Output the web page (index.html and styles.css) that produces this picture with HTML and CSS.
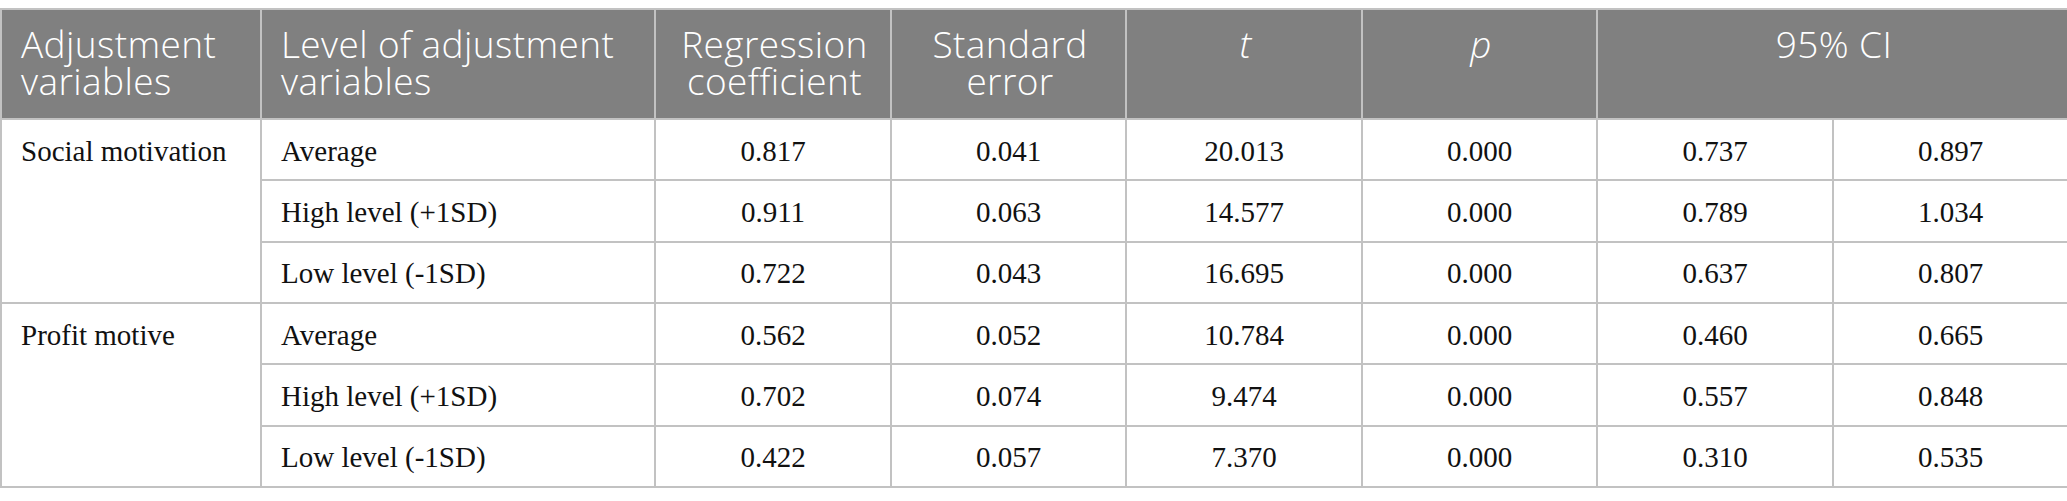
FILE: index.html
```html
<!DOCTYPE html>
<html>
<head>
<meta charset="utf-8">
<link rel="stylesheet" href="styles.css">
</head>
<body>
<table class="tbl">
  <colgroup>
    <col class="c1"><col class="c2"><col class="c3"><col class="c4"><col class="c5"><col class="c6"><col class="c7"><col class="c8">
  </colgroup>
  <thead>
    <tr>
      <th class="left">Adjustment variables</th>
      <th class="left">Level of adjustment variables</th>
      <th>Regression coefficient</th>
      <th>Standard error</th>
      <th><i>t</i></th>
      <th><i>p</i></th>
      <th colspan="2">95% CI</th>
    </tr>
  </thead>
  <tbody>
    <tr>
      <td class="left" rowspan="3">Social motivation</td>
      <td class="left">Average</td>
      <td>0.817</td><td>0.041</td><td>20.013</td><td>0.000</td><td>0.737</td><td>0.897</td>
    </tr>
    <tr>
      <td class="left">High level (+1SD)</td>
      <td>0.911</td><td>0.063</td><td>14.577</td><td>0.000</td><td>0.789</td><td>1.034</td>
    </tr>
    <tr>
      <td class="left">Low level (-1SD)</td>
      <td>0.722</td><td>0.043</td><td>16.695</td><td>0.000</td><td>0.637</td><td>0.807</td>
    </tr>
    <tr>
      <td class="left" rowspan="3">Profit motive</td>
      <td class="left">Average</td>
      <td>0.562</td><td>0.052</td><td>10.784</td><td>0.000</td><td>0.460</td><td>0.665</td>
    </tr>
    <tr>
      <td class="left">High level (+1SD)</td>
      <td>0.702</td><td>0.074</td><td>9.474</td><td>0.000</td><td>0.557</td><td>0.848</td>
    </tr>
    <tr>
      <td class="left">Low level (-1SD)</td>
      <td>0.422</td><td>0.057</td><td>7.370</td><td>0.000</td><td>0.310</td><td>0.535</td>
    </tr>
  </tbody>
</table>
</body>
</html>
```
FILE: styles.css
```css
html, body {
  margin: 0;
  padding: 0;
  background: #ffffff;
}
body {
  padding-top: 8px;
}
.tbl {
  border-collapse: collapse;
  table-layout: fixed;
  width: 2067px;
}
.c1 { width: 260px; }
.c2 { width: 394px; }
.c3 { width: 236px; }
.c4 { width: 235px; }
.c5 { width: 236px; }
.c6 { width: 235px; }
.c7 { width: 236px; }
.c8 { width: 235px; }

.tbl th,
.tbl td {
  border: 2px solid #c2c2c2;
  vertical-align: top;
  text-align: center;
}
.tbl th {
  background: #808080;
  color: #ffffff;
  font-family: "Open Sans", "DejaVu Sans", sans-serif;
  font-weight: 300;
  font-size: 37px;
  letter-spacing: 0.4px;
  line-height: 37px;
  padding: 15px 16px 19px 19px;
}
.tbl td {
  color: #111111;
  font-family: "Liberation Serif", "Times New Roman", serif;
  font-size: 29px;
  line-height: 30px;
  padding: 15.67px 19px 13.66px 19px;
}
.tbl .left {
  text-align: left;
}
```
